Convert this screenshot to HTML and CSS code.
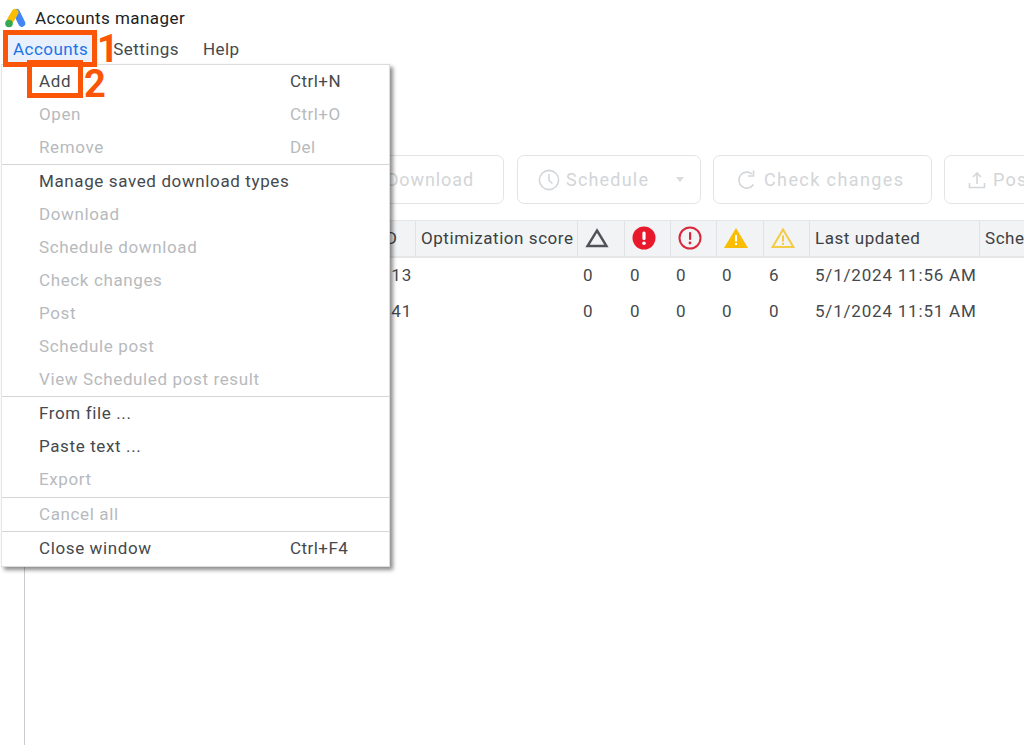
FILE: index.html
```html
<!DOCTYPE html>
<html lang="en">
<head>
<meta charset="utf-8">
<title>Accounts manager</title>
<link rel="stylesheet" href="styles.css">
</head>
<body>
<div class="app">
  <header class="titlebar">
    <svg class="logo" width="24" height="22" viewBox="0 0 24 22" aria-hidden="true">
      <line x1="13.500" y1="5.500" x2="18.800" y2="16.300" stroke="#4285f4" stroke-width="7" stroke-linecap="round"/>
      <line x1="12" y1="5.500" x2="7.500" y2="13" stroke="#fbbc04" stroke-width="7" stroke-linecap="round"/>
      <circle cx="6" cy="16.500" r="3.800" fill="#34a853"/>
    </svg>
    <span class="title">Accounts manager</span>
  </header>
  <nav class="menubar">
    <span class="menubar-item active">Accounts</span>
    <span class="menubar-item">Settings</span>
    <span class="menubar-item">Help</span>
  </nav>
  <main class="workspace">
    <aside class="sidebar"></aside>
    <section class="content">
      <div class="toolbar">
        <button class="tool tool-download">Download</button>
        <button class="tool tool-schedule">
          <svg width="24" height="24" viewBox="0 0 24 24" fill="none" stroke="#d4d7da" stroke-width="1.6"><circle cx="12" cy="12" r="9.6"/><path d="M12 6v6.5l3.5 3"/></svg>
          <span>Schedule</span>
          <i class="caret"></i>
        </button>
        <button class="tool tool-check">
          <svg width="22" height="22" viewBox="0 0 22 22" fill="none" stroke="#d4d7da" stroke-width="1.6"><path d="M17.500 15.500A8 8 0 1 1 16 5"/><path d="M17.500 1.500V7h-5.500"/></svg>
          <span>Check changes</span>
        </button>
        <button class="tool tool-post">
          <svg width="20" height="20" viewBox="0 0 20 20" fill="none" stroke="#d4d7da" stroke-width="1.6"><path d="M10 14V3M6 7l4-4 4 4M2.500 13v4.500h15V13"/></svg>
          <span>Post</span>
        </button>
      </div>
      <div class="grid">
        <div class="head head-id">ID</div>
        <div class="head">Optimization score</div>
        <div class="head head-icon">
          <svg width="24" height="22" viewBox="0 0 24 22" fill="none" stroke="#4f5357" stroke-width="2.400"><path d="M12 3.500 21.500 19h-19z"/></svg>
        </div>
        <div class="head head-icon">
          <svg width="24" height="24" viewBox="0 0 24 24"><circle cx="12" cy="12" r="11.500" fill="#e8192c"/><rect x="10.400" y="5.500" width="3.200" height="8.500" rx="1.500" fill="#fff"/><circle cx="12" cy="17.200" r="1.800" fill="#fff"/></svg>
        </div>
        <div class="head head-icon">
          <svg width="24" height="24" viewBox="0 0 24 24" fill="none"><circle cx="12" cy="12" r="10.500" stroke="#d9283c" stroke-width="2"/><rect x="11" y="6" width="2.200" height="8" rx="1" fill="#d9283c"/><circle cx="12" cy="17" r="1.400" fill="#d9283c"/></svg>
        </div>
        <div class="head head-icon">
          <svg width="24" height="22" viewBox="0 0 24 22"><path d="M12 1 24 21H0z" fill="#fbbc04"/><rect x="11" y="8" width="2" height="6.500" fill="#fff"/><rect x="11" y="16" width="2" height="2" fill="#fff"/></svg>
        </div>
        <div class="head head-icon">
          <svg width="24" height="22" viewBox="0 0 24 22"><path d="M12 2.500 22.400 20H1.600z" fill="none" stroke="#f3cb45" stroke-width="2"/><rect x="11" y="8.500" width="2" height="6" fill="#f3cb45"/><rect x="11" y="15.800" width="2" height="2" fill="#f3cb45"/></svg>
        </div>
        <div class="head">Last updated</div>
        <div class="head">Schedule</div>

        <div class="cell cell-id">13</div><div class="cell"></div>
        <div class="cell">0</div><div class="cell">0</div><div class="cell">0</div><div class="cell">0</div><div class="cell">6</div>
        <div class="cell">5/1/2024 11:56 AM</div><div class="cell"></div>

        <div class="cell cell-id">41</div><div class="cell"></div>
        <div class="cell">0</div><div class="cell">0</div><div class="cell">0</div><div class="cell">0</div><div class="cell">0</div>
        <div class="cell">5/1/2024 11:51 AM</div><div class="cell"></div>
      </div>
    </section>
  </main>
</div>

<div class="menu">
  <div class="menu-group">
    <div class="menu-item"><span>Add</span><span class="key">Ctrl+N</span></div>
    <div class="menu-item off"><span>Open</span><span class="key">Ctrl+O</span></div>
    <div class="menu-item off"><span>Remove</span><span class="key">Del</span></div>
  </div>
  <div class="menu-group">
    <div class="menu-item">Manage saved download types</div>
    <div class="menu-item off">Download</div>
    <div class="menu-item off">Schedule download</div>
    <div class="menu-item off">Check changes</div>
    <div class="menu-item off">Post</div>
    <div class="menu-item off">Schedule post</div>
    <div class="menu-item off">View Scheduled post result</div>
  </div>
  <div class="menu-group menu-group-tall">
    <div class="menu-item">From file ...</div>
    <div class="menu-item">Paste text ...</div>
    <div class="menu-item off">Export</div>
  </div>
  <div class="menu-group">
    <div class="menu-item off">Cancel all</div>
  </div>
  <div class="menu-group menu-group-tall">
    <div class="menu-item"><span>Close window</span><span class="key">Ctrl+F4</span></div>
  </div>
</div>

<div class="callout callout-one"></div>
<div class="callout callout-two"></div>
<span class="step step-one">1</span>
<span class="step step-two">2</span>
</body>
</html>
```
FILE: styles.css
```css
* { box-sizing: border-box; }
html, body { margin: 0; height: 100%; overflow: hidden; background: #fff; }
body { font-family: Roboto, "Liberation Sans", sans-serif; font-size: 17px; color: #45494d; position: relative; }

.app { display: flex; flex-direction: column; height: 745px; }

.titlebar { display: flex; align-items: center; height: 33px; padding: 3px 0 0 3px; gap: 8px; }
.title { color: #202124; font-size: 17px; letter-spacing: .45px; }
.logo { display: block; }

.menubar { display: flex; height: 32px; padding-left: 3px; align-items: center; }
.menubar-item { padding: 0 10px; line-height: 32px; letter-spacing: .45px; margin-right: 4px; }
.menubar-item.active { color: #1a73e8; background: #e8f0fe; margin-right: 5px; }

.workspace { flex: 1; display: flex; min-height: 0; }
.sidebar { width: 25px; border-right: 1px solid #c9ccd0; flex: none; }
.content { flex: 1; min-width: 0; overflow: hidden; padding-top: 90px; }

.toolbar { display: flex; gap: 12px; height: 49px; margin-bottom: 16px; }
.tool { flex: none; display: flex; align-items: center; height: 49px; background: #fff; border: 1px solid #e2e4e7; border-radius: 7px; color: #d2d5d8; font: 18px/1 Roboto, "Liberation Sans", sans-serif; letter-spacing: 1.2px; }
.tool-download { margin: 0 1px 0 281px; width: 198px; padding: 0 29px 0 0; justify-content: flex-end; letter-spacing: .9px; }
.tool-schedule { width: 184px; padding-left: 19px; gap: 5px; }
.tool-schedule span { margin-right: 22px; }
.tool-check { width: 219px; padding-left: 22px; gap: 6px; letter-spacing: 1.400px; }
.tool-post { width: 120px; padding-left: 22px; gap: 6px; }
.caret { width: 0; height: 0; border: 4px solid transparent; border-top: 5px solid #d8dadd; border-bottom: 0; }

.grid { display: grid; grid-template-columns: 391px 162px 47px 46px 46px 47px 46px 170px 120px; grid-template-rows: 37px 36px 36px; }
.head { display: flex; align-items: center; height: 38px; padding: 0 0 2px 5px; background: #f1f3f4; border-right: 1px solid #e0e2e5; border-top: 1px solid #e4e6e8; border-bottom: 2px solid #e4e6e8; color: #3c4043; white-space: nowrap; letter-spacing: .55px; }
.head-id { justify-content: flex-end; padding-right: 18px; letter-spacing: .1px; }
.head-icon { padding: 0 8px 1px 0; justify-content: center; }
.cell { display: flex; align-items: center; padding-left: 5px; height: 36px; white-space: nowrap; letter-spacing: .8px; }
.cell-id { justify-content: flex-end; padding-right: 4px; }

.menu { position: absolute; left: 1px; top: 64px; width: 389px; background: #fff; border: 1px solid #dadce0; border-left-color: #e4e6e8; box-shadow: 3px 3px 4px rgba(0,0,0,.45); }
.menu-group + .menu-group { border-top: 1px solid #d3d5d8; }
.menu-group-tall { padding-bottom: 1px; }
.menu-item { display: flex; height: 33px; align-items: center; padding: 0 0 2px 37px; letter-spacing: .62px; }
.menu-item > span:first-child { width: 251px; white-space: nowrap; }
.menu-item.off { color: #b7babd; }
.key { white-space: nowrap; letter-spacing: .45px; }

.callout { position: absolute; border: 5px solid #fb5607; }
.callout-one { left: 3px; top: 30px; width: 94px; height: 37px; }
.callout-two { left: 27px; top: 60px; width: 56px; height: 38px; }
.step { position: absolute; color: #fb5607; font: 700 38px/1 Roboto, "Liberation Sans", sans-serif; }
.step-one { left: 97px; top: 30px; }
.step-two { left: 84px; top: 65px; }
```
